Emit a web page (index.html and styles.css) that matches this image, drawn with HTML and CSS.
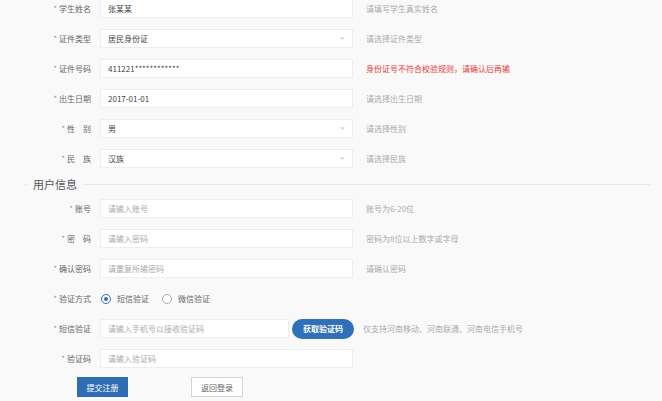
FILE: index.html
```html
<!DOCTYPE html>
<html lang="zh-CN">
<head>
    <meta charset="UTF-8">
    <meta name="viewport" content="width=device-width, initial-scale=1.0">
    <title>学生注册</title>
    <link rel="stylesheet" href="styles.css">
</head>
<body>

    <form class="reg-form">
        <div class="row">
            <label class="label"><i>*</i>学生姓名</label>
            <div class="field">张某某</div>
            <span class="hint">请填写学生真实姓名</span>
        </div>
        <div class="row">
            <label class="label"><i>*</i>证件类型</label>
            <div class="field select">居民身份证</div>
            <span class="hint">请选择证件类型</span>
        </div>
        <div class="row">
            <label class="label"><i>*</i>证件号码</label>
            <div class="field">411221************</div>
            <span class="hint error">身份证号不符合校验规则，请确认后再输</span>
        </div>
        <div class="row">
            <label class="label"><i>*</i>出生日期</label>
            <div class="field">2017-01-01</div>
            <span class="hint">请选择出生日期</span>
        </div>
        <div class="row">
            <label class="label"><i>*</i>性　别</label>
            <div class="field select">男</div>
            <span class="hint">请选择性别</span>
        </div>
        <div class="row">
            <label class="label"><i>*</i>民　族</label>
            <div class="field select">汉族</div>
            <span class="hint">请选择民族</span>
        </div>

        <div class="section">
            <span class="line short"></span>
            <span class="section-title">用户信息</span>
            <span class="line"></span>
        </div>

        <div class="row">
            <label class="label"><i>*</i>账号</label>
            <div class="field placeholder">请输入账号</div>
            <span class="hint">账号为6-20位</span>
        </div>
        <div class="row">
            <label class="label"><i>*</i>密　码</label>
            <div class="field placeholder">请输入密码</div>
            <span class="hint">密码为8位以上数字或字母</span>
        </div>
        <div class="row">
            <label class="label"><i>*</i>确认密码</label>
            <div class="field placeholder">请重复所输密码</div>
            <span class="hint">请确认密码</span>
        </div>
        <div class="row">
            <label class="label"><i>*</i>验证方式</label>
            <div class="radios">
                <span class="radio checked"></span>短信验证
                <span class="radio"></span>微信验证
            </div>
        </div>
        <div class="row">
            <label class="label"><i>*</i>短信验证</label>
            <div class="field short placeholder">请输入手机号以接收验证码</div>
            <button type="button" class="btn-code">获取验证码</button>
            <span class="hint sms">仅支持河南移动、河南联通、河南电信手机号</span>
        </div>
        <div class="row">
            <label class="label"><i>*</i>验证码</label>
            <div class="field placeholder">请输入验证码</div>
        </div>

        <div class="actions">
            <button type="button" class="btn primary">提交注册</button>
            <button type="button" class="btn">返回登录</button>
        </div>
    </form>

</body>
</html>
```

FILE: styles.css
```css
body {
    font-family: "Noto Sans CJK SC", "Liberation Sans", sans-serif;
    background-color: #f9f9f9;
    margin: 0;
    font-size: 8px;
    color: #333;
}
.reg-form {
    margin-top: -1px;
    width: 662px;
}
.row {
    display: flex;
    align-items: center;
    height: 19px;
    margin-bottom: 11px;
}
.label {
    width: 100px;
    box-sizing: border-box;
    padding-right: 9px;
    text-align: right;
    color: #666;
}
.label i {
    font-style: normal;
    color: #999;
    margin-right: 2px;
}
.field {
    position: relative;
    width: 253px;
    height: 19px;
    box-sizing: border-box;
    border: 1px solid #eeeeee;
    background-color: #fff;
    padding-left: 7px;
    line-height: 17px;
    color: #444;
}
.field.short {
    width: 189px;
}
.placeholder {
    color: #aaa;
}
.select::after {
    content: "";
    position: absolute;
    right: 8px;
    top: 6px;
    width: 2px;
    height: 2px;
    border-right: 1px solid #c4c4c4;
    border-bottom: 1px solid #c4c4c4;
    transform: rotate(45deg);
}
.hint {
    margin-left: 13px;
    color: #aaa;
}
.hint.error {
    color: #e8383d;
}
.hint.sms {
    margin-left: 9px;
}
.section {
    display: flex;
    align-items: center;
    height: 31px;
    padding-left: 25px;
    padding-right: 12px;
    margin-top: -11px;
}
.section-title {
    font-size: 11px;
    color: #555;
    padding: 0 6px;
}
.line {
    flex: 1;
    height: 1px;
    background-color: #e8e8e8;
    margin-top: 2px;
}
.line.short {
    flex: none;
    width: 2px;
}
.radios {
    display: flex;
    align-items: center;
    padding-left: 1px;
    color: #666;
}
.radio {
    width: 10px;
    height: 10px;
    box-sizing: border-box;
    border: 1px solid #aaa;
    border-radius: 50%;
    background-color: #fff;
    margin-right: 6px;
    position: relative;
}
.radios .radio:last-child {
    margin-left: 13px;
}
.radio.checked {
    border-color: #2f6db5;
}
.radio.checked::after {
    content: "";
    position: absolute;
    left: 2px;
    top: 2px;
    width: 4px;
    height: 4px;
    border-radius: 50%;
    background-color: #2f6db5;
}
.btn-code {
    margin-left: 3px;
    width: 62px;
    height: 20px;
    border: none;
    border-radius: 10px;
    background-color: #3070b8;
    color: #fff;
    font-family: inherit;
    font-size: 8px;
    font-weight: bold;
    padding: 0;
}
.actions {
    display: flex;
    padding-left: 77px;
    margin-top: -2px;
}
.btn {
    width: 52px;
    height: 20px;
    box-sizing: border-box;
    border: 1px solid #d4d4d4;
    background-color: #fff;
    color: #666;
    font-family: inherit;
    font-size: 8px;
    padding: 0;
    margin-right: 63px;
}
.btn.primary {
    width: 51px;
    border-color: #2f6cb3;
    background-color: #2f6cb3;
    color: #fff;
}
```
